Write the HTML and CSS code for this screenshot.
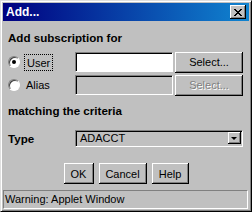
FILE: index.html
```html
<!DOCTYPE html>
<html lang="en">
<head>
    <meta charset="UTF-8">
    <title>Add...</title>
    <link rel="stylesheet" href="styles.css">
</head>
<body>
    <div class="window">
        <div class="titlebar">
            <span class="title">Add...</span>
            <span class="close">
                <svg width="8" height="7" viewBox="0 0 8 7">
                    <path d="M0 0h2v1h1v1h2v-1h1v-1h2v1h-1v1h-1v1h-1v1h1v1h1v1h1v1h-2v-1h-1v-1h-2v1h-1v1h-2v-1h1v-1h1v-1h1v-1h-1v-1h-1v-1h-1z" fill="#000"/>
                </svg>
            </span>
        </div>
        <div class="content">
            <div class="section">Add subscription for</div>
            <div class="row">
                <span class="choice"><span class="radio checked"></span><span class="focus">User</span></span>
                <span class="field"></span>
                <span class="button">Select...</span>
            </div>
            <div class="row">
                <span class="choice"><span class="radio"></span><span class="label">Alias</span></span>
                <span class="field disabled"></span>
                <span class="button disabled">Select...</span>
            </div>
            <div class="section second">matching the criteria</div>
            <div class="row type">
                <span class="choice bold">Type</span>
                <span class="combo">
                    <span class="value">ADACCT</span>
                    <span class="arrow"></span>
                </span>
            </div>
            <div class="actions">
                <span class="button ok">OK</span>
                <span class="button cancel">Cancel</span>
                <span class="button help">Help</span>
            </div>
        </div>
        <div class="status">Warning: Applet Window</div>
    </div>
</body>
</html>
```

FILE: styles.css
```css
body {
    margin: 0;
    background-color: #C0C0C0;
    font-family: "Liberation Sans", Arial, sans-serif;
    font-size: 11px;
    color: #000;
}

.window {
    width: 252px;
    height: 212px;
    box-sizing: border-box;
    border: 1px solid;
    border-color: #DFDFDF #000 #000 #DFDFDF;
    box-shadow: inset 1px 1px #FFF, inset -1px -1px #808080;
    padding: 2px;
    display: flex;
    flex-direction: column;
    background-color: #C0C0C0;
}

.titlebar {
    height: 18px;
    display: flex;
    align-items: center;
    background: linear-gradient(to right, #000080, #1084D0);
}

.title {
    flex: 1;
    padding-left: 3px;
    color: #FFF;
    font-weight: bold;
    font-size: 12px;
}

.close {
    width: 16px;
    height: 14px;
    box-sizing: border-box;
    margin-right: 3px;
    display: flex;
    align-items: center;
    justify-content: center;
    background-color: #C0C0C0;
    box-shadow: inset -1px -1px #000, inset 1px 1px #FFF, inset -2px -2px #808080;
}

.content {
    padding: 0 6px 0 5px;
}

.section {
    margin-top: 10px;
    height: 14px;
    line-height: 14px;
    font-weight: bold;
    font-size: 11.6px;
}

.section.second {
    margin-top: 9px;
}

.row {
    display: flex;
    align-items: center;
    height: 20px;
    margin-top: 7px;
}

.row + .row {
    margin-top: 3px;
}

.row.type {
    height: 18px;
    margin-top: 11px;
}

.choice {
    width: 67px;
    display: flex;
    align-items: center;
}

.choice.bold {
    font-weight: bold;
    font-size: 11.6px;
}

.radio {
    position: relative;
    width: 12px;
    height: 12px;
    box-sizing: border-box;
    border-radius: 50%;
    border: 1px solid;
    border-color: #808080 #FFF #FFF #808080;
    background-color: #FFF;
    box-shadow: inset 1px 1px #404040;
    margin-right: 4px;
}

.radio.checked::after {
    content: "";
    position: absolute;
    left: 3px;
    top: 3px;
    width: 4px;
    height: 4px;
    border-radius: 50%;
    background-color: #000;
}

.focus {
    outline: 1px dotted #000;
    padding: 2px 2px 1px;
    margin-left: 1px;
}

.label {
    margin-left: 2px;
}

.field {
    width: 98px;
    height: 20px;
    box-sizing: border-box;
    background-color: #FFF;
    border: 1px solid;
    border-color: #808080 #FFF #FFF #808080;
    box-shadow: inset 1px 1px #000;
}

.field.disabled {
    background-color: #C0C0C0;
}

.button {
    height: 21px;
    box-sizing: border-box;
    display: flex;
    align-items: center;
    justify-content: center;
    background-color: #C0C0C0;
    box-shadow: inset -1px -1px #000, inset 1px 1px #FFF, inset -2px -2px #808080;
}

.row .button {
    width: 68px;
    margin-left: 2px;
}

.button.disabled {
    color: #808080;
    text-shadow: 1px 1px #FFF;
}

.combo {
    width: 168px;
    height: 17px;
    box-sizing: border-box;
    display: flex;
    align-items: center;
    background-color: #C0C0C0;
    border: 1px solid;
    border-color: #808080 #FFF #FFF #808080;
    box-shadow: inset 1px 1px #000;
    padding-left: 4px;
}

.value {
    flex: 1;
}

.arrow {
    position: relative;
    width: 13px;
    height: 12px;
    margin-right: 1px;
    box-sizing: border-box;
    box-shadow: inset -1px -1px #000, inset 1px 1px #FFF, inset -2px -2px #808080;
}

.arrow::after {
    content: "";
    position: absolute;
    left: 3px;
    top: 5px;
    border-left: 3px solid transparent;
    border-right: 3px solid transparent;
    border-top: 3px solid #000;
}

.actions {
    display: flex;
    justify-content: center;
    gap: 5px;
    margin-top: 16px;
    padding-left: 1px;
}

.button.ok {
    width: 30px;
}

.button.cancel {
    width: 48px;
}

.button.help {
    width: 37px;
}

.status {
    margin-top: auto;
    height: 19px;
    margin-right: 1px;
    box-sizing: border-box;
    border: 1px solid;
    border-color: #808080 #FFF #FFF #808080;
    padding-left: 1px;
    line-height: 17px;
}
```
